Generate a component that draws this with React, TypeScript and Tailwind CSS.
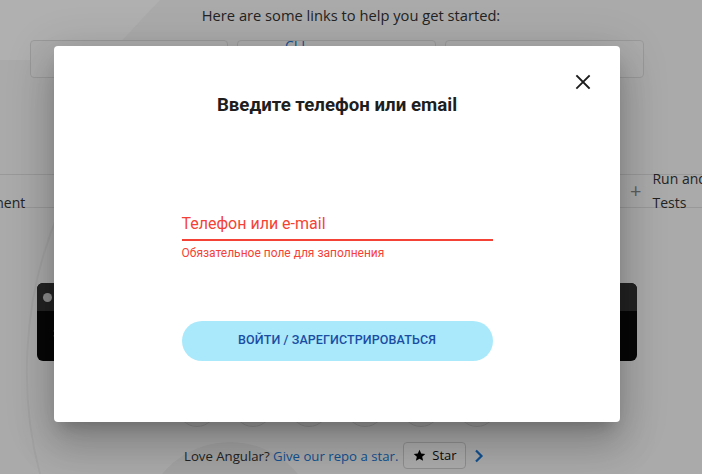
import React from "react";

function CloseIcon() {
  return (
    <svg width="16" height="16" viewBox="0 0 16 16" fill="none">
      <path d="M2 2 L14 14 M14 2 L2 14" stroke="#1c1c1c" strokeWidth="1.8" strokeLinecap="square" />
    </svg>
  );
}

function StarIcon() {
  return (
    <svg width="13" height="13" viewBox="0 0 24 24">
      <path d="M12 1.5l3.1 7 7.6.7-5.8 5 1.8 7.5L12 17.8 5.3 21.7l1.8-7.5-5.8-5 7.6-.7z" fill="#000" />
    </svg>
  );
}

export default function App() {
  return (
    <div className="relative w-[702px] h-[474px] overflow-hidden bg-[#f7f7f7] font-['Open_Sans',sans-serif] text-[#333]">
      {/* decorative background shapes */}
      <svg className="absolute inset-0" width="702" height="474" viewBox="0 0 702 474">
        <path d="M0 0 L160 0 C140 20 120 45 100 60 L0 60 Z" fill="#ffffff" />
        <path d="M40 474 C20 400 20 300 60 210" stroke="#ededed" strokeWidth="2" fill="none" />
        <circle cx="230" cy="530" r="88" fill="#ececec" />
      </svg>

      {/* page content */}
      <div className="relative flex flex-col">
        <p className="pt-[4px] text-center text-[14.7px] leading-[22px] text-[#333]">
          Here are some links to help you get started:
        </p>
        <div className="ml-[30px] mt-[14px] flex w-[614px] gap-[9px]">
          <div className="h-[38px] w-[198px] rounded-[4px] border border-[#e0e0e0] bg-[#fafafa]" />
          <div className="h-[38px] w-[199px] rounded-[4px] border border-[#e0e0e0] bg-[#fafafa] pl-[47px] text-[14px] leading-[10px] text-[#1976d2]">
            CLI
          </div>
          <div className="h-[38px] w-[199px] rounded-[4px] border border-[#e0e0e0] bg-[#fafafa]" />
        </div>

        <div className="mt-[96px] flex h-[34px] border-y border-[#dedede]">
          <div className="-ml-[52px] flex w-[674px] shrink-0 items-center">
            <div className="text-[14px] leading-[24px] text-[#333]">
              <div>New</div>
              <div>Component</div>
            </div>
          </div>
          <div className="flex shrink-0 items-center gap-[11px] pl-[8px]">
            <span className="text-[20px] leading-none text-[#888]">+</span>
            <div className="whitespace-nowrap text-[14px] leading-[24px] text-[#333]">
              <div>Run and Watch</div>
              <div>Tests</div>
            </div>
          </div>
        </div>

        <div className="ml-[37px] mt-[75px] flex h-[78px] w-[600px] flex-col overflow-hidden rounded-[6px] bg-[#0b0b0b]">
          <div className="flex h-[28px] items-center bg-[#333333] pl-[6px]">
            <span className="h-[9px] w-[9px] rounded-full bg-[#cccccc]" />
          </div>
          <div className="pl-[16px] pt-[16px] text-[12px] leading-[14px] text-[#1da2b8]">&gt;</div>
        </div>

        <div className="ml-[177px] mt-[26px] flex gap-[16px]">
          {[0, 1, 2, 3, 4, 5].map((i) => (
            <span key={i} className="h-[40px] w-[40px] rounded-full border border-[#dcdcdc] bg-[#f0f0f0]" />
          ))}
        </div>

        <div className="ml-[184px] mt-[15px] flex items-center">
          <span className="text-[13.2px] leading-[20px] text-[#333]">Love Angular?&nbsp;</span>
          <span className="text-[13.2px] leading-[20px] text-[#1976d2]">Give our repo a star.</span>
          <div className="ml-[5px] flex h-[27px] w-[63px] items-center justify-center gap-[6px] rounded-[4px] border border-[#cfcfcf] bg-[#fafafa] text-[13px] text-[#111]">
            <StarIcon />
            <span>Star</span>
          </div>
          <svg className="ml-[8px]" width="10" height="14" viewBox="0 0 10 14">
            <path d="M2 1.5 L7.5 7 L2 12.5" stroke="#1976d2" strokeWidth="2.2" fill="none" />
          </svg>
        </div>
      </div>

      {/* backdrop */}
      <div className="absolute inset-0 bg-black/[0.31]" />

      {/* dialog */}
      <div className="absolute left-[54px] top-[46px] h-[376px] w-[566px] rounded-[4px] bg-white shadow-[0_11px_15px_-7px_rgba(0,0,0,0.2),0_24px_38px_3px_rgba(0,0,0,0.14),0_9px_46px_8px_rgba(0,0,0,0.12)] font-['Roboto',sans-serif]">
        <button className="absolute left-[521px] top-[28px] flex h-[16px] w-[16px] items-center justify-center">
          <CloseIcon />
        </button>
        <div className="flex flex-col items-center pt-[47px]">
          <h2 className="text-[18.7px] font-bold leading-[24px] text-[#1e1e1e]">Введите телефон или email</h2>
          <div className="mt-[97px] w-[311px]">
            <div className="text-[16px] leading-[20px] text-[#f44336]">Телефон или e-mail</div>
            <div className="mt-[5px] h-[1.5px] bg-[#f44336]" />
            <div className="mt-[5px] text-[12px] leading-[14px] text-[#f44336]">Обязательное поле для заполнения</div>
          </div>
          <button className="mt-[61px] flex h-[40px] w-[311px] items-center justify-center rounded-full bg-[#aae9fb] text-[12.5px] font-medium tracking-[0.1px] text-[#1b4ea3]">
            ВОЙТИ / ЗАРЕГИСТРИРОВАТЬСЯ
          </button>
        </div>
      </div>
    </div>
  );
}
